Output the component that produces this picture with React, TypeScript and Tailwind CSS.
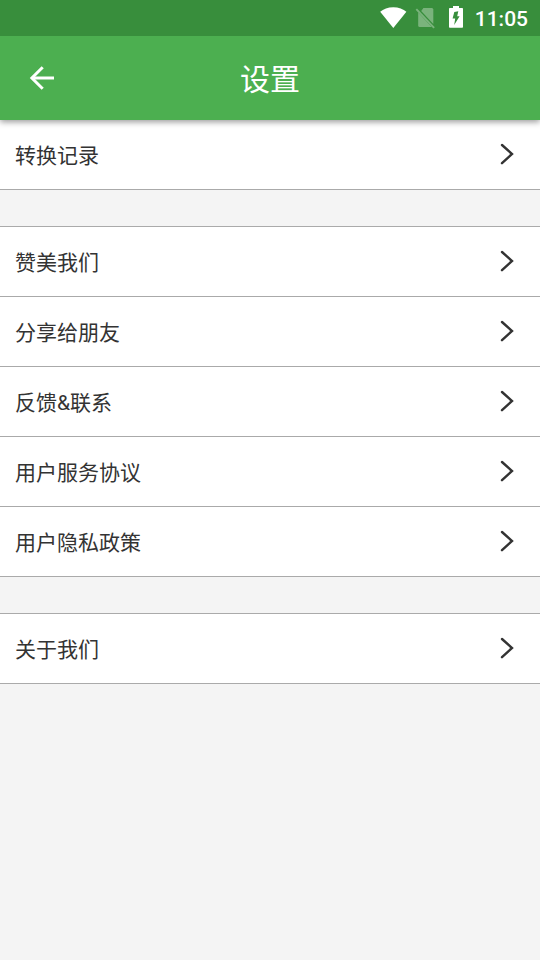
import type { ReactNode } from "react"

const GROUPS = [
  ["转换记录"],
  ["赞美我们", "分享给朋友", "反馈&联系", "用户服务协议", "用户隐私政策"],
  ["关于我们"],
]

export default function App() {
  return (
    <div className="min-h-screen bg-[#f4f4f4] font-['Roboto','Noto_Sans_CJK_SC',sans-serif] text-[#333333]">
      <StatusBar />
      <AppBar title="设置" />
      <main className="flex flex-col gap-9">
        {GROUPS.map((items) => (
          <Group key={items[0]}>
            {items.map((label) => (
              <Row key={label} label={label} />
            ))}
          </Group>
        ))}
      </main>
    </div>
  )
}

function StatusBar() {
  return (
    <div className="relative z-20 flex h-9 items-center justify-end bg-[#388e3c] pr-3 text-white">
      <WifiIcon />
      <NoSimIcon />
      <BatteryIcon />
      <span className="ml-[11px] pt-0.5 text-[21px] leading-6 font-medium">11:05</span>
    </div>
  )
}

function AppBar({ title }: { title: string }) {
  return (
    <header className="relative z-10 grid h-21 grid-cols-[84px_1fr_84px] items-center bg-[#4caf50] text-white shadow-[0_2px_6px_rgba(0,0,0,0.4)]">
      <button type="button" aria-label="返回" className="flex h-full items-center justify-center">
        <svg className="size-9" viewBox="0 0 36 36" fill="none" stroke="currentColor" strokeWidth="3">
          <path d="M30 18H9" />
          <path d="M18.7 7.2 7.9 18l10.8 10.8" strokeLinejoin="miter" />
        </svg>
      </button>
      <h1 className="pt-1 text-center text-[30px] leading-9">{title}</h1>
    </header>
  )
}

function Group({ children }: { children: ReactNode }) {
  return (
    <section className="border-t border-[#aaaaaa] bg-white first:border-t-0">
      {children}
    </section>
  )
}

function Row({ label }: { label: string }) {
  return (
    <button
      type="button"
      className="flex h-[70px] w-full items-center justify-between border-b border-[#aaaaaa] pr-6 pl-[15px] text-left"
    >
      <span className="pt-0.5 text-[21px] leading-8">{label}</span>
      <svg
        className="h-6 w-4"
        viewBox="0 0 16 24"
        fill="none"
        stroke="currentColor"
        strokeWidth="2.4"
        strokeLinecap="round"
      >
        <path d="M2 2 12 11 2 20.2" />
      </svg>
    </button>
  )
}

function WifiIcon() {
  return (
    <svg className="h-6 w-7" viewBox="0 0 28 24" fill="currentColor">
      <path d="M14.3 22 1.2 5.7C4.3 3 9 1.2 14.3 1.2s10 1.8 13.1 4.5z" />
    </svg>
  )
}

function NoSimIcon() {
  return (
    <svg className="ml-2 h-6 w-5" viewBox="0 0 20 24" fill="currentColor" opacity="0.33">
      <path d="M8.4 2H16.8Q18.300 2 18.3 3.5V18L6.2 5z" />
      <path d="M3.2 6.500 16.8 21H4.700Q3.2 21 3.2 19.500z" />
      <path d="M.6 3.8 2 2.4 19.8 21.2 18.4 22.6z" />
    </svg>
  )
}

function BatteryIcon() {
  return (
    <svg className="ml-[13px] h-6 w-4" viewBox="0 0 16 24" fill="currentColor">
      <path
        fillRule="evenodd"
        d="M5 0h6v2h3.2q.8 0 .8.8V21q0 .8-.8.8H1.8Q1 21.8 1 21V2.8q0-.8.8-.8H5zM10.300 5.200 6.300 6 4.600 12.600H7.200L6.200 19 11.600 10.200H9.200z"
      />
    </svg>
  )
}
